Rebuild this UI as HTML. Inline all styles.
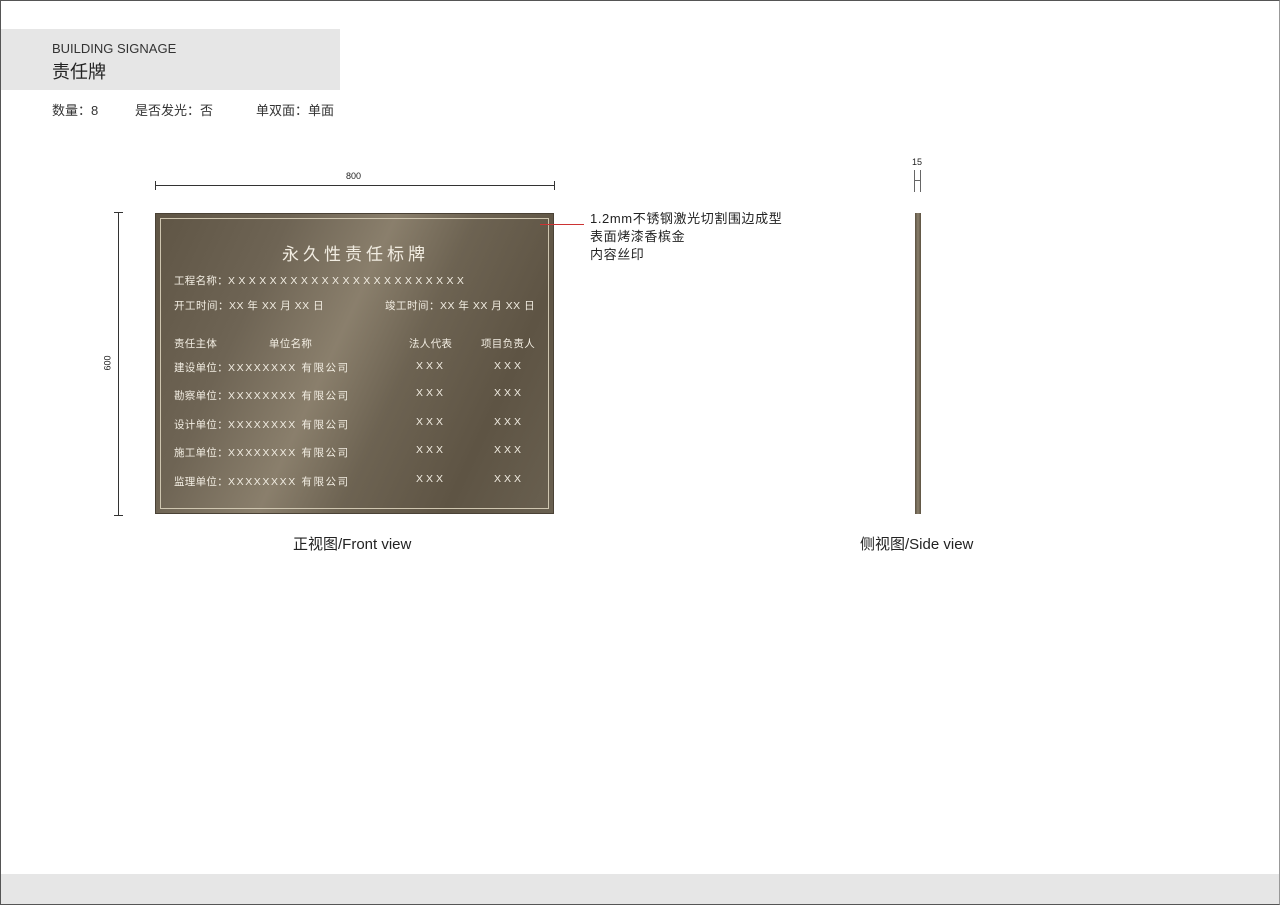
<!DOCTYPE html>
<html><head><meta charset="utf-8"><style>
*{margin:0;padding:0;box-sizing:border-box}
body{width:1280px;height:905px;position:relative;background:#fff;overflow:hidden;font-family:"Liberation Sans","Noto Sans CJK SC",sans-serif;color:#222}
.a{position:absolute;white-space:nowrap}
.frame{position:absolute;left:0;top:0;width:1280px;height:905px;border:1px solid #555;border-right:1px solid #999}
.sign{position:absolute;left:155px;top:213px;width:399px;height:301px;background:linear-gradient(115deg,#5f5545 0%,#6e6454 25%,#8a7f6c 45%,#6d6352 60%,#5e5444 80%,#696050 100%);border:1px solid #4a4236}
.inner{position:absolute;left:4px;top:4px;right:4px;bottom:4px;border:1px solid #cfc6b0}
.s{position:absolute;white-space:nowrap;color:#f2ede2;font-size:10.5px;letter-spacing:0.3px}
.x1{letter-spacing:3.4px}
.x2{letter-spacing:1.6px}
.x3{letter-spacing:3px}
.d{letter-spacing:0.5px}
</style></head><body>
<div class="frame"></div>
<div class="a" style="left:1px;top:29px;width:339px;height:61px;background:#e6e6e6"></div>
<div class="a" style="left:52px;top:41px;font-size:13px;color:#333">BUILDING SIGNAGE</div>
<div class="a" style="left:52px;top:58px;font-size:18px;color:#222">责任牌</div>
<div class="a" style="left:52px;top:100px;font-size:13px;color:#333">数量：8</div>
<div class="a" style="left:135px;top:100px;font-size:13px;color:#333">是否发光：否</div>
<div class="a" style="left:256px;top:100px;font-size:13px;color:#333">单双面：单面</div>
<div class="a" style="left:1px;top:874px;width:1278px;height:30px;background:#e6e6e6"></div>

<div class="a" style="left:155px;top:185px;width:400px;height:1px;background:#333"></div>
<div class="a" style="left:155px;top:181px;width:1px;height:9px;background:#333"></div>
<div class="a" style="left:554px;top:181px;width:1px;height:9px;background:#333"></div>
<div class="a" style="left:346px;top:171px;font-size:9px;color:#222">800</div>
<div class="a" style="left:118px;top:212px;width:1px;height:303px;background:#333"></div>
<div class="a" style="left:114px;top:212px;width:9px;height:1px;background:#333"></div>
<div class="a" style="left:114px;top:515px;width:9px;height:1px;background:#333"></div>
<div class="a" style="left:100px;top:358px;font-size:9px;transform:rotate(-90deg);color:#222">600</div>

<div class="sign"><div class="inner"></div>
<div class="s" style="left:0;width:399px;text-align:center;top:26px;font-size:17px;letter-spacing:4px">永久性责任标牌</div>
<div class="s" style="left:18px;top:59px">工程名称：<span class="x1">XXXXXXXXXXXXXXXXXXXXXXX</span></div>
<div class="s d" style="left:18px;top:84px">开工时间：XX 年 XX 月 XX 日</div>
<div class="s d" style="left:229px;top:84px">竣工时间：XX 年 XX 月 XX 日</div>
<div class="s" style="left:18px;top:122px">责任主体</div>
<div class="s" style="left:113px;top:122px">单位名称</div>
<div class="s" style="left:253px;top:122px">法人代表</div>
<div class="s" style="left:325px;top:122px">项目负责人</div>
<div class="s" style="left:18px;top:146px">建设单位：<span class="x2">XXXXXXXX 有限公司</span></div>
<div class="s" style="left:18px;top:174px">勘察单位：<span class="x2">XXXXXXXX 有限公司</span></div>
<div class="s" style="left:18px;top:203px">设计单位：<span class="x2">XXXXXXXX 有限公司</span></div>
<div class="s" style="left:18px;top:231px">施工单位：<span class="x2">XXXXXXXX 有限公司</span></div>
<div class="s" style="left:18px;top:260px">监理单位：<span class="x2">XXXXXXXX 有限公司</span></div>
<div class="s x3" style="left:260px;top:146px">XXX</div><div class="s x3" style="left:338px;top:146px">XXX</div>
<div class="s x3" style="left:260px;top:173px">XXX</div><div class="s x3" style="left:338px;top:173px">XXX</div>
<div class="s x3" style="left:260px;top:202px">XXX</div><div class="s x3" style="left:338px;top:202px">XXX</div>
<div class="s x3" style="left:260px;top:230px">XXX</div><div class="s x3" style="left:338px;top:230px">XXX</div>
<div class="s x3" style="left:260px;top:259px">XXX</div><div class="s x3" style="left:338px;top:259px">XXX</div>
</div>

<div class="a" style="left:540px;top:224px;width:44px;height:1px;background:#c33"></div>
<div class="a" style="left:590px;top:210px;font-size:13px;line-height:18px;letter-spacing:0.6px;color:#222">1.2mm不锈钢激光切割围边成型<br>表面烤漆香槟金<br>内容丝印</div>

<div class="a" style="left:293px;top:533px;font-size:15px;color:#222">正视图/Front view</div>

<div class="a" style="left:912px;top:157px;font-size:9px;color:#222">15</div>
<div class="a" style="left:914px;top:170px;width:1px;height:22px;background:#666"></div>
<div class="a" style="left:920px;top:170px;width:1px;height:22px;background:#666"></div>
<div class="a" style="left:914px;top:180px;width:7px;height:1px;background:#666"></div>
<div class="a" style="left:915px;top:213px;width:6px;height:301px;background:linear-gradient(90deg,#5b5141,#8a7f6c,#5b5141)"></div>
<div class="a" style="left:860px;top:533px;font-size:15px;color:#222">侧视图/Side view</div>
</body></html>
